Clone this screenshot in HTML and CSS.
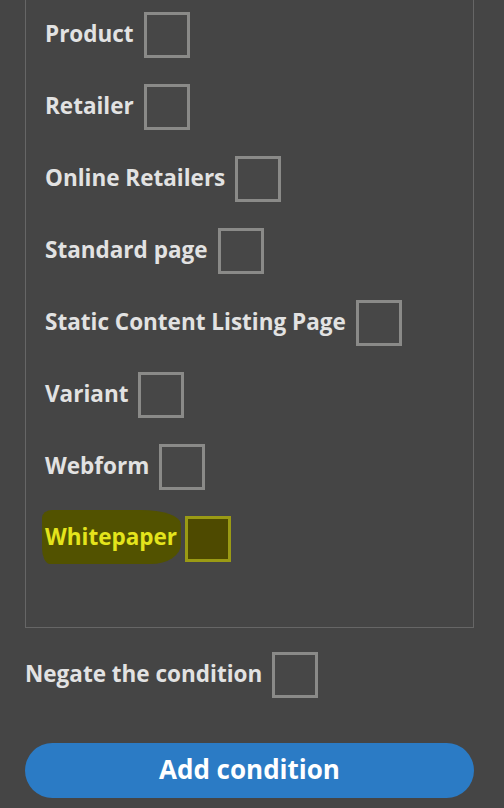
FILE: index.html
```html
<!DOCTYPE html>
<html>
<head>
<meta charset="utf-8">
<link rel="stylesheet" href="styles.css">
</head>
<body>
<div class="page">
  <div class="fieldset">
    <label class="row"><span class="lbl">Product</span><span class="box"></span></label>
    <label class="row"><span class="lbl">Retailer</span><span class="box"></span></label>
    <label class="row"><span class="lbl">Online Retailers</span><span class="box"></span></label>
    <label class="row"><span class="lbl">Standard page</span><span class="box"></span></label>
    <label class="row"><span class="lbl">Static Content Listing Page</span><span class="box"></span></label>
    <label class="row"><span class="lbl">Variant</span><span class="box"></span></label>
    <label class="row"><span class="lbl">Webform</span><span class="box"></span></label>
    <label class="row hl"><span class="lbl">Whitepaper</span><span class="box"></span></label>
  </div>
  <label class="row negate"><span class="lbl">Negate the condition</span><span class="box"></span></label>
  <button class="btn">Add condition</button>
</div>
</body>
</html>
```
FILE: styles.css
```css
html, body {
  margin: 0;
  padding: 0;
  background: #454545;
}
.page {
  padding: 0 30px 0 25px;
  font-family: "Open Sans", "DejaVu Sans", sans-serif;
  font-weight: 700;
  color: #e2e2e2;
}
.fieldset {
  border: 1px solid #666;
  border-top: none;
  margin-top: -1px;
  padding: 0 0 52px 19px;
  display: flex;
  flex-direction: column;
}
.row {
  height: 72px;
  display: flex;
  align-items: center;
  gap: 10px;
  font-size: 22.5px;
}
.lbl {
  margin-bottom: 4px;
}
.box {
  width: 40px;
  height: 40px;
  border: 3px solid #8a8a88;
  background: #474747;
}
.hl .lbl {
  color: #e4e41c;
  background: #525200;
  padding: 11px 4px 12px 3px;
  margin: 0 -6px 4px -3px;
  border-radius: 10px 40px 30px 8px / 8px 14px 20px 16px;
}
.hl .box {
  border-color: #9a9a14;
  background: #4e4a00;
}
.negate {
  margin-top: 14px;
  height: 66px;
}
.btn {
  display: block;
  width: 100%;
  margin-top: 35px;
  height: 55px;
  border: none;
  border-radius: 28px;
  background: #2b7bc5;
  color: #fff;
  font-family: "Open Sans", "DejaVu Sans", sans-serif;
  font-weight: 700;
  font-size: 26px;
  padding: 0 0 3px;
}
```
